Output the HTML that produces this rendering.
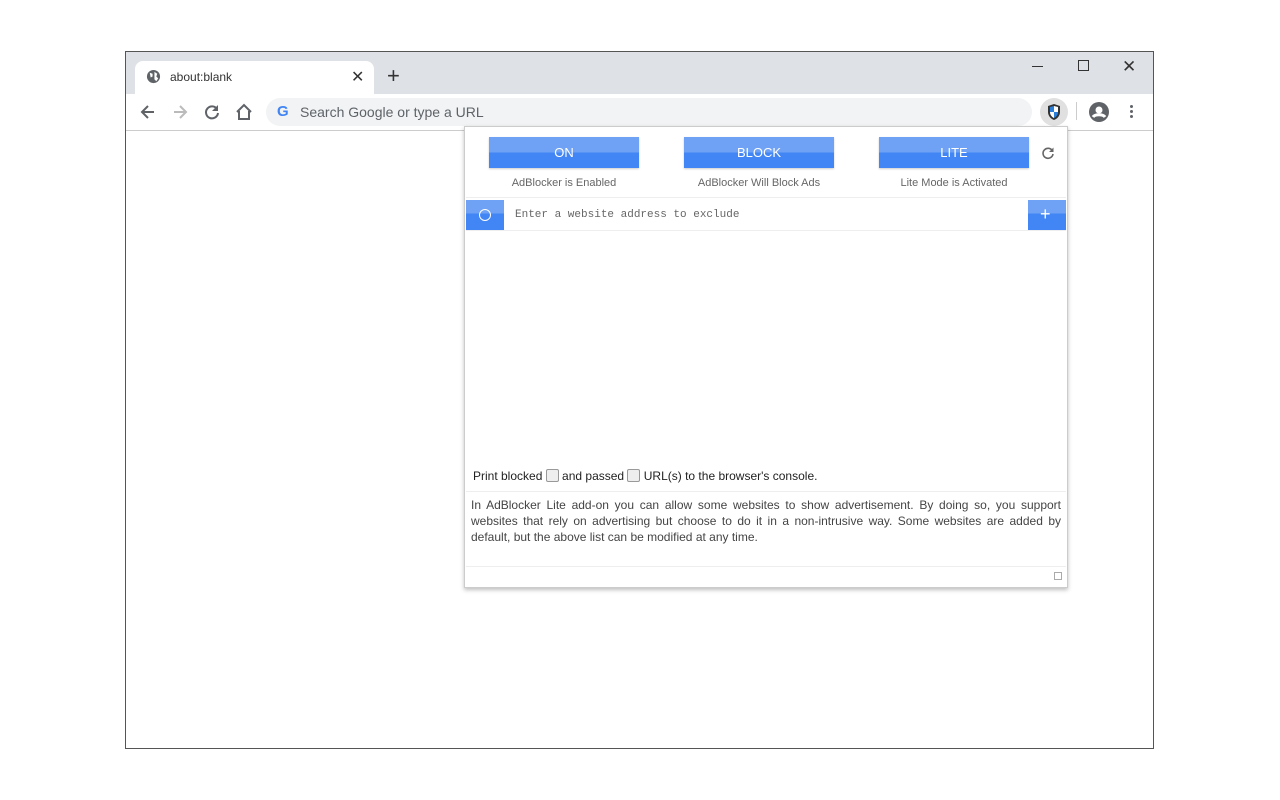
<!DOCTYPE html>
<html><head><style>
*{margin:0;padding:0;box-sizing:border-box}
body{width:1280px;height:800px;background:#fff;font-family:"Liberation Sans",sans-serif;position:relative;overflow:hidden}
.abs{position:absolute}
.btn{position:absolute;top:137px;width:150px;height:31px;background:linear-gradient(#6fa2f5 0,#6fa2f5 50%,#4285f4 50%);color:#fff;font-size:13px;text-align:center;line-height:31px;box-shadow:0 1px 2px rgba(0,0,0,.2)}
.lbl{position:absolute;top:177px;width:150px;text-align:center;font-size:11px;color:#666}
.sq{position:absolute;width:38px;height:30px;background:linear-gradient(#6fa2f5 0,#6fa2f5 45%,#4285f4 45%)}
.cb{display:inline-block;width:13px;height:13px;border:1px solid #999;border-radius:2px;background:#eee;vertical-align:-2px}
</style></head><body>
<div class="abs" style="left:125px;top:51px;width:1029px;height:698px;border:1px solid #555"></div>
<div class="abs" style="left:126px;top:52px;width:1027px;height:42px;background:#dee1e6"></div>
<div class="abs" style="left:135px;top:61px;width:239px;height:34px;background:#fff;border-radius:8px 8px 0 0"></div>
<svg class="abs" style="left:146px;top:69px" width="15" height="15" viewBox="0 0 16 16"><circle cx="8" cy="8" r="7" fill="#5f6368"/><path d="M4 4l3 1 0 3-2 1zM9 3l3 2-1 3 2 2-2 3-2-2z" fill="#fff"/></svg>
<div class="abs" style="left:170px;top:70px;font-size:12px;color:#333">about:blank</div>
<div class="abs" style="left:351px;top:67px;font-size:16px;color:#333">✕</div>
<div class="abs" style="left:387px;top:63px;font-size:22px;color:#333">+</div>
<div class="abs" style="left:1032px;top:66px;width:11px;height:1px;background:#333"></div>
<div class="abs" style="left:1078px;top:60px;width:11px;height:11px;border:1px solid #333"></div>
<div class="abs" style="left:1122px;top:57px;font-size:17px;color:#333">✕</div>
<div class="abs" style="left:126px;top:130px;width:1027px;height:1px;background:#ccc"></div>
<svg class="abs" style="left:138px;top:102px" width="20" height="20" viewBox="0 0 20 20"><path d="M16 10H4M10 4l-6 6 6 6" stroke="#5f6368" stroke-width="2" fill="none"/></svg>
<svg class="abs" style="left:170px;top:102px" width="20" height="20" viewBox="0 0 20 20"><path d="M4 10h12M10 4l6 6-6 6" stroke="#bbb" stroke-width="2" fill="none"/></svg>
<svg class="abs" style="left:202px;top:102px" width="20" height="20" viewBox="0 0 20 20"><path d="M15 7A6 6 0 1 0 16 11" stroke="#5f6368" stroke-width="2" fill="none"/><path d="M16 3v6h-6z" fill="#5f6368"/></svg>
<svg class="abs" style="left:234px;top:102px" width="20" height="20" viewBox="0 0 20 20"><path d="M3 10L10 3l7 7M5 9v8h10V9" stroke="#5f6368" stroke-width="2" fill="none"/></svg>
<div class="abs" style="left:266px;top:98px;width:766px;height:28px;background:#f1f3f4;border-radius:14px"></div>
<div class="abs" style="left:277px;top:103px;font-size:15px;font-weight:bold;color:#4285f4">G</div>
<div class="abs" style="left:300px;top:104px;font-size:14px;color:#5f6368">Search Google or type a URL</div>
<div class="abs" style="left:1040px;top:98px;width:28px;height:28px;border-radius:50%;background:#e0e0e0"></div>
<svg class="abs" style="left:1046px;top:103px" width="16" height="18" viewBox="0 0 16 18"><path d="M8 1L2 3v6c0 4 3 7 6 8 3-1 6-4 6-8V3z" fill="#333"/><path d="M8 3v6H4V4zM8 9h4c0 3-2 5-4 6z" fill="#2a7ed8"/><path d="M8 3l4 1v5H8zM8 9v6c-2-1-4-3-4-6z" fill="#fff"/></svg>
<div class="abs" style="left:1076px;top:102px;width:1px;height:18px;background:#ccc"></div>
<svg class="abs" style="left:1089px;top:102px" width="20" height="20" viewBox="0 0 20 20"><circle cx="10" cy="10" r="10" fill="#5f6368"/><circle cx="10" cy="8" r="3.5" fill="#fff"/><path d="M4 15c2-3 10-3 12 0" stroke="#fff" stroke-width="3" fill="none"/></svg>
<div class="abs" style="left:1130px;top:105px;width:3px;height:3px;border-radius:50%;background:#5f6368;box-shadow:0 5px #5f6368,0 10px #5f6368"></div>

<div class="abs" style="left:464px;top:126px;width:604px;height:462px;background:#fff;border:1px solid #ccc;box-shadow:0 2px 4px rgba(0,0,0,.25)"></div>
<div class="btn" style="left:489px">ON</div>
<div class="btn" style="left:684px">BLOCK</div>
<div class="btn" style="left:879px">LITE</div>
<div class="lbl" style="left:489px">AdBlocker is Enabled</div>
<div class="lbl" style="left:684px">AdBlocker Will Block Ads</div>
<div class="lbl" style="left:879px">Lite Mode is Activated</div>
<svg class="abs" style="left:1041px;top:146px" width="14" height="14" viewBox="0 0 14 14"><path d="M11.5 5A5 5 0 1 0 12 8" stroke="#666" stroke-width="1.6" fill="none"/><path d="M12.5 1.5v4.5h-4.5z" fill="#666"/></svg>
<div class="abs" style="left:466px;top:197px;width:600px;height:1px;background:#eee"></div>
<div class="abs" style="left:466px;top:230px;width:600px;height:1px;background:#eee"></div>
<div class="sq" style="left:466px;top:200px"></div>
<div class="abs" style="left:479px;top:209px;width:12px;height:12px;border:1.5px solid #fff;border-radius:50%"></div>
<div class="abs" style="left:515px;top:209px;font-family:'Liberation Mono',monospace;font-size:11px;color:#666">Enter a website address to exclude</div>
<div class="sq" style="left:1028px;top:200px"></div>
<div class="abs" style="left:1040px;top:204px;color:#fff;font-size:18px">+</div>
<div class="abs" style="left:473px;top:469px;font-size:12px;color:#222">Print blocked <span class="cb"></span> and passed <span class="cb"></span> URL(s) to the browser's console.</div>
<div class="abs" style="left:466px;top:491px;width:600px;height:1px;background:#eee"></div>
<div class="abs" style="left:471px;top:497px;width:590px;font-size:12px;line-height:16px;color:#444;text-align:justify">In AdBlocker Lite add-on you can allow some websites to show advertisement. By doing so, you support websites that rely on advertising but choose to do it in a non-intrusive way. Some websites are added by default, but the above list can be modified at any time.</div>
<div class="abs" style="left:466px;top:566px;width:600px;height:1px;background:#eee"></div>
<div class="abs" style="left:1054px;top:572px;width:8px;height:8px;border:1px solid #aaa"></div>
</body></html>
